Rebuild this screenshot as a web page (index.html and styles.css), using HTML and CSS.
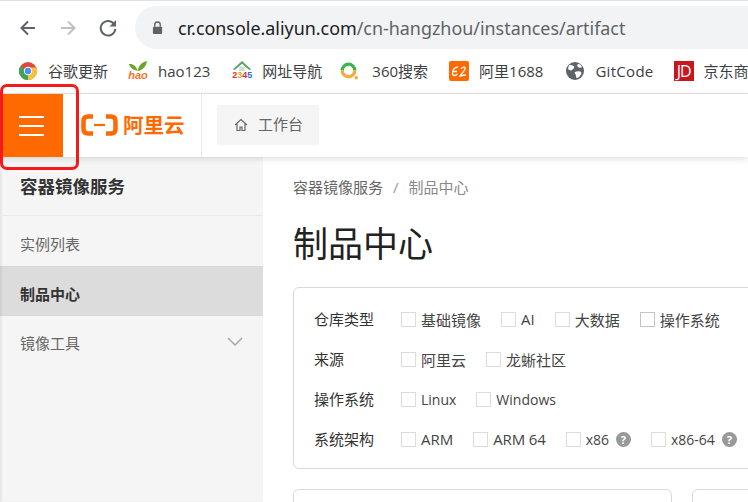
FILE: index.html
```html
<!DOCTYPE html>
<html lang="zh-CN">
<head>
  <meta charset="UTF-8" />
  <meta name="viewport" content="width=device-width, initial-scale=1.0" />
  <title>制品中心</title>
  <link rel="stylesheet" href="styles.css">
</head>
<body>
  <div class="page">
    <!-- browser toolbar -->
    <div class="toolbar">
      <svg class="nav-icon" viewBox="0 0 20 20"><path d="M17 10H4M10 3.500 3.500 10l6.500 6.500" fill="none" stroke="#5f6368" stroke-width="2"/></svg>
      <svg class="nav-icon" viewBox="0 0 20 20"><path d="M3 10h13M10 3.500l6.500 6.500-6.500 6.500" fill="none" stroke="#bdc1c6" stroke-width="2"/></svg>
      <svg class="nav-icon" viewBox="0 0 20 20"><path d="M16.300 6.500A7.300 7.300 0 1 0 17.300 11" fill="none" stroke="#5f6368" stroke-width="2"/><path d="M18 2v6.500h-6.500z" fill="#5f6368"/></svg>
      <div class="omnibox">
        <svg class="lock" viewBox="0 0 12 15"><path d="M3 6V4a3 3 0 0 1 6 0v2" fill="none" stroke="#5f6368" stroke-width="1.500"/><rect x="1" y="6" width="10" height="8" rx="1" fill="#5f6368"/></svg>
        <span class="url"><span class="url-host">cr.console.aliyun.com</span>/cn-hangzhou/instances/artifact</span>
      </div>
    </div>

    <div class="bookmarks">
      <div class="mark">
        <svg class="mark-icon" viewBox="0 0 18 18"><circle cx="9" cy="9" r="9" fill="#e0463a"/><path d="M9 9 1.200 4.500A9 9 0 0 0 9 18z" fill="#3ea457"/><path d="M9 9 9 18A9 9 0 0 0 17.400 5.500H9z" fill="#f5c33b"/><circle cx="9" cy="9" r="4.200" fill="#fff"/><circle cx="9" cy="9" r="3.200" fill="#4f8ef0"/></svg>
        <span>谷歌更新</span>
      </div>
      <div class="mark gap-hao">
        <span class="hao-icon">
          <svg viewBox="0 0 20 10"><path d="M10 10C6 9 2 7 1 3c4-.5 7 2 9 7zM10 10c0-5 4-9 9-10-.5 5-4 9-9 10z" fill="#6aa52a"/></svg>
          <span class="hao-text">hao</span>
        </span>
        <span>hao123</span>
      </div>
      <div class="mark gap-2345">
        <span class="house-icon">
          <svg viewBox="0 0 20 11"><path d="M10 0 0 9l2 1 8-7 8 7 2-1z" fill="#5aa469"/><path d="M7 6h6v5H7z" fill="#cfe3c8"/></svg>
          <span class="house-text"><span class="d-red">2</span><span class="d-yel">3</span><span class="d-red">4</span><span class="d-blu">5</span></span>
        </span>
        <span>网址导航</span>
      </div>
      <div class="mark gap-360">
        <svg class="mark-icon ring" viewBox="0 0 18 18"><path d="M2.200 8.500a6.300 6.300 0 0 1 12.600 0" fill="none" stroke="#39b54a" stroke-width="3.200"/><path d="M2.200 8.500a6.300 6.300 0 0 0 12.600 0" fill="none" stroke="#f7a93b" stroke-width="3.200"/><circle cx="16.200" cy="15.800" r="1.800" fill="#f7a93b"/></svg>
        <span>360搜索</span>
      </div>
      <div class="mark gap-1688">
        <svg class="mark-icon wide" viewBox="0 0 20 20"><rect width="20" height="20" rx="2" fill="#ff6a00"/><path d="M9 6C5 6 3 10 3.500 13c.4 2 3 2 5 0M4 10.500h4M12 8c2-3 5-2 4 0-1 3-4 5-5 7 2-.5 4-1 6-1" fill="none" stroke="#fff" stroke-width="1.300"/></svg>
        <span>阿里1688</span>
      </div>
      <div class="mark gap-git">
        <svg class="mark-icon" viewBox="0 0 18 18"><circle cx="9" cy="9" r="9" fill="#5f6368"/><path d="M3 3c2 0 4 0 5 1.500S7 7 6 8 3 8 2 7zM9 10c2-1 5-1 6 0s0 3-2 5-3 1-3-1-2-3-1-4zM12 2c2 0 3 1 4 3-1 1-3 1-4 0s-1-2 0-3z" fill="#fff"/></svg>
        <span class="git-text">GitCode</span>
      </div>
      <div class="mark gap-jd">
        <span class="jd-icon">JD</span>
        <span>京东商</span>
      </div>
    </div>

    <!-- console header -->
    <header class="topbar">
      <button class="menu-btn" aria-label="menu"><span></span><span></span><span></span></button>
      <div class="logo">
        <svg class="logo-mark" viewBox="0 0 37 22"><path d="M12 2.500H7Q2.500 2.500 2.500 7v8Q2.500 19.500 7 19.500h5M25 2.500h5q4.500 0 4.500 4.500v8q0 4.500-4.500 4.500h-5" fill="none" stroke="#ff6a00" stroke-width="4.500"/><path d="M13 11h11" stroke="#ff6a00" stroke-width="2.200"/></svg>
        <span class="logo-text">阿里云</span>
      </div>
      <div class="workbench">
        <a class="workbench-btn">
          <svg class="home" viewBox="0 0 14 14"><path d="M1 7 7 1.500 13 7M3 5.500V12.500h3V9h2v3.500h3V5.500" fill="none" stroke="#666" stroke-width="1.200"/></svg>
          <span class="workbench-label">工作台</span>
        </a>
      </div>
    </header>

    <div class="content">
      <aside class="sidebar">
        <div class="side-title">容器镜像服务</div>
        <ul class="side-menu">
          <li>实例列表</li>
          <li class="active">制品中心</li>
          <li class="has-sub">镜像工具
            <svg class="chevron" viewBox="0 0 16 9"><path d="M1 1l7 7 7-7" fill="none" stroke="#aaa" stroke-width="1.600"/></svg>
          </li>
        </ul>
      </aside>

      <main class="main">
        <div class="crumbs"><span>容器镜像服务</span><span class="sep">/</span><span class="crumb-now">制品中心</span></div>
        <h1>制品中心</h1>

        <section class="filters">
          <div class="filter-row">
            <div class="filter-name">仓库类型</div>
            <label class="opt"><i class="box"></i>基础镜像</label>
            <label class="opt"><i class="box"></i>AI</label>
            <label class="opt"><i class="box"></i>大数据</label>
            <label class="opt"><i class="box box-dark"></i>操作系统</label>
          </div>
          <div class="filter-row">
            <div class="filter-name">来源</div>
            <label class="opt"><i class="box"></i>阿里云</label>
            <label class="opt"><i class="box"></i>龙蜥社区</label>
          </div>
          <div class="filter-row">
            <div class="filter-name">操作系统</div>
            <label class="opt narrow"><i class="box"></i>Linux</label>
            <label class="opt narrow"><i class="box"></i>Windows</label>
          </div>
          <div class="filter-row">
            <div class="filter-name">系统架构</div>
            <label class="opt"><i class="box"></i>ARM</label>
            <label class="opt tight"><i class="box"></i>ARM 64</label>
            <label class="opt narrow"><i class="box"></i>x86<b class="help">?</b></label>
            <label class="opt narrow"><i class="box"></i>x86-64<b class="help">?</b></label>
          </div>
        </section>

        <div class="cards">
          <div class="card"></div>
          <div class="card"></div>
        </div>
      </main>
    </div>

    <!-- red annotation round the menu button -->
    <div class="annotation"></div>
  </div>
</body>
</html>
```

FILE: styles.css
```css
* { box-sizing: border-box; margin: 0; padding: 0; }
html, body { height: 100%; overflow: hidden; background: #fff; }
body {
  font-family: 'Open Sans', 'Noto Sans CJK SC', sans-serif;
  font-size: 15px;
  color: #333;
}
.page {
  position: relative;
  width: 748px;
  height: 502px;
  overflow: hidden;
  display: flex;
  flex-direction: column;
}

/* browser chrome */
.toolbar {
  height: 49px;
  flex: none;
  border-top: 1px solid #dee1e6;
  padding: 5px 0 0 18px;
  display: flex;
}
.nav-icon { width: 20px; height: 20px; margin: 12px 20px 0 0; flex: none; }
.nav-icon:nth-child(3) { margin-right: 17px; }
.omnibox {
  flex: 1;
  height: 43px;
  background: #f1f3f4;
  border-radius: 22px 0 0 22px;
  display: flex;
  align-items: center;
  padding-left: 17px;
}
.lock { width: 11px; height: 14px; margin-right: 15px; }
.url { font-size: 17.900px; color: #5f6368; white-space: nowrap; font-family: 'Noto Sans', sans-serif; }
.url-host { color: #202124; }

.bookmarks {
  height: 44px;
  flex: none;
  display: flex;
  align-items: center;
  padding: 0 0 1px 19px;
  white-space: nowrap;
  color: #3c4043;
}
.mark { display: flex; align-items: center; flex: none; }
.mark-icon { width: 18px; height: 18px; margin-right: 11px; flex: none; }
.mark-icon.wide { width: 20px; height: 20px; margin-right: 10px; }
.mark-icon.ring { margin-right: 14px; }
.gap-hao { margin-left: 20px; }
.gap-2345 { margin-left: 22px; }
.gap-360 { margin-left: 18px; }
.gap-1688 { margin-left: 21px; }
.gap-git { margin-left: 23px; }
.gap-jd { margin-left: 20px; }
.git-text { letter-spacing: 0.300px; }
.hao-icon, .house-icon {
  width: 20px;
  margin-right: 10px;
  display: flex;
  flex-direction: column;
  align-items: center;
  flex: none;
}
.hao-icon svg, .house-icon svg { width: 20px; height: 10px; display: block; }
.hao-text { font: italic bold 11px/9px 'Liberation Sans', sans-serif; color: #f0762b; }
.house-text { font: bold 9px/9px 'Liberation Sans', sans-serif; }
.d-red { color: #d9342b; }
.d-yel { color: #e0a526; }
.d-blu { color: #2f6fc4; }
.jd-icon {
  width: 20px;
  height: 20px;
  margin-right: 10px;
  background: #c9151e;
  color: #fff;
  font: 16px/20px 'Open Sans', sans-serif;
  letter-spacing: -1px;
  text-align: center;
}

/* console header */
.topbar {
  height: 64px;
  flex: none;
  display: flex;
  border-top: 1px solid #dcdcdc;
  background: #fff;
  box-shadow: 0 2px 6px rgba(0,0,0,0.12);
  position: relative;
  z-index: 1;
}
.menu-btn {
  width: 63px;
  background: #ff6a00;
  border: none;
  display: flex;
  flex-direction: column;
  justify-content: center;
  align-items: center;
  gap: 7px;
  flex: none;
}
.menu-btn span { width: 25px; height: 2px; background: #fff; }
.logo {
  width: 139px;
  padding: 0 0 1px 18px;
  display: flex;
  align-items: center;
  gap: 5px;
  border-right: 1px solid #e8e8e8;
  flex: none;
}
.logo-mark { width: 37px; height: 22px; flex: none; }
.logo-text { color: #ff6a00; font-size: 20.500px; font-weight: 700; line-height: 1; white-space: nowrap; }
.workbench { padding: 11px 0 0 15px; }
.workbench-btn {
  width: 102px;
  height: 40px;
  border-radius: 2px;
  background: #f5f5f6;
  color: #666;
  display: flex;
  align-items: center;
  padding-left: 17px;
  gap: 10px;
}
.workbench-label { padding-bottom: 3px; }
.home { width: 14px; height: 14px; }

/* sidebar */
.content { flex: 1; display: flex; min-height: 0; }
.sidebar {
  width: 263px;
  flex: none;
  background: #f5f5f5;
  box-shadow: inset 2px 0 2px rgba(0,0,0,0.06);
}
.side-title {
  height: 59px;
  padding: 15px 0 0 20px;
  font-size: 17.500px;
  font-weight: 700;
  line-height: 28px;
  color: #333;
  border-bottom: 1px solid #e9e9e9;
}
.side-menu { list-style: none; }
.side-menu li {
  height: 50px;
  line-height: 56px;
  padding-left: 20px;
  color: #666;
  position: relative;
}
.side-menu li.active {
  background: #dcdcdc;
  box-shadow: inset 2px 0 2px rgba(0,0,0,0.06);
  color: #333;
  font-weight: 700;
}
.side-menu li.has-sub { line-height: 54px; }
.chevron { position: absolute; right: 20px; top: 21px; width: 16px; height: 9px; }

/* main column */
.main { flex: 1; padding: 20px 0 0 30px; min-width: 0; }
.crumbs { font-size: 15px; line-height: 20px; color: #666; white-space: nowrap; }
.sep { margin: 0 10px; color: #999; }
.crumb-now { color: #888; }
h1 {
  font-size: 35px;
  font-weight: 400;
  line-height: 48px;
  color: #222;
  margin-top: 23px;
}
.filters {
  width: 480px;
  height: 182px;
  margin-top: 19px;
  border: 1px solid #d9d9d9;
  border-radius: 6px;
  padding: 11px 0 0 20px;
}
.filter-row {
  height: 40px;
  display: flex;
  align-items: center;
  white-space: nowrap;
}
.filter-name { width: 87px; padding-bottom: 2px; color: #333; flex: none; }
.opt {
  display: flex;
  align-items: center;
  margin-right: 20px;
  color: #444;
  flex: none;
}
.opt.narrow { font-size: 14px; }
.opt.tight { letter-spacing: -0.150px; }
.box {
  width: 15px;
  height: 15px;
  border: 1px solid #dcdcdc;
  background: #fff;
  margin-right: 5px;
  flex: none;
}
.box-dark { border-color: #c4c4c4; }
.help {
  width: 15px;
  height: 15px;
  margin-left: 7px;
  border-radius: 50%;
  background: #999;
  color: #fff;
  font-size: 11px;
  line-height: 15px;
  text-align: center;
}
.cards { display: flex; gap: 20px; margin-top: 20px; }
.card {
  width: 379px;
  height: 60px;
  flex: none;
  border: 1px solid #d9d9d9;
  border-radius: 6px;
}

.annotation {
  position: absolute;
  left: 0;
  top: 84px;
  width: 79px;
  height: 86px;
  border: 3px solid #f5191c;
  border-radius: 7px;
  z-index: 2;
}
```
